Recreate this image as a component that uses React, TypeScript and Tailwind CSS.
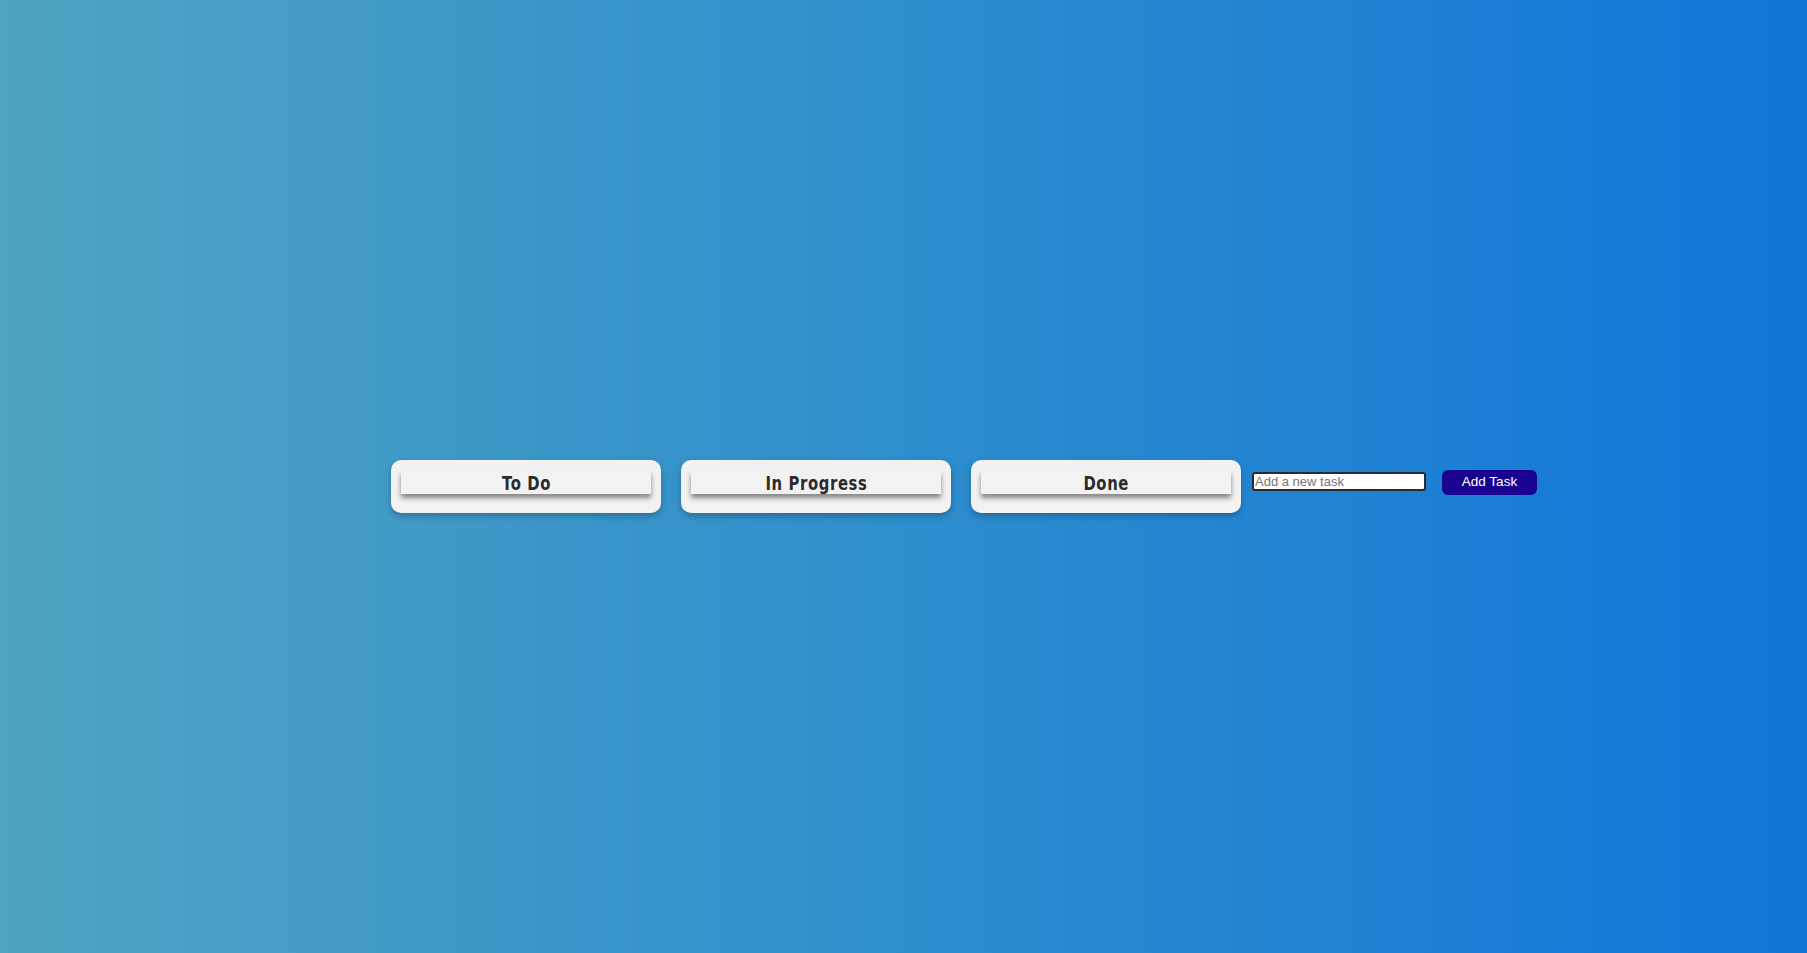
import React from "react";

function Column({ title }: { title: string }) {
  return (
    <div className="w-[270px] h-[53px] rounded-[10px] bg-[#f2f2f2] px-[10px] pt-[10px] shadow-[0_3px_6px_rgba(0,0,0,0.25)]">
      <div className="h-[24px] bg-[#f2f2f2] shadow-[0_4px_5px_rgba(0,0,0,0.45)] flex items-center justify-center pt-[3px]">
        <span className="inline-block scale-x-[0.78] text-[19px] font-bold text-[#2b2b2b] tracking-[0.8px] leading-none font-['DejaVu_Sans',sans-serif]">
          {title}
        </span>
      </div>
    </div>
  );
}

export default function App() {
  return (
    <div className="w-full min-h-screen h-[953px] bg-[linear-gradient(to_right,#4ea5c2,#0f76d8)] flex items-center justify-center pl-[121px] pt-[20px]">
      <div className="flex items-start">
        <Column title="To Do" />
        <div className="w-[20px]" />
        <Column title="In Progress" />
        <div className="w-[20px]" />
        <Column title="Done" />
        <input
          placeholder="Add a new task"
          className="ml-[11px] mt-[12px] w-[174px] h-[19px] bg-white border-2 border-[#2a2a2a] rounded-[3px] px-[1px] text-[13px] text-black placeholder:text-[#757575] font-['Liberation_Sans',Arial,sans-serif] outline-none"
        />
        <button className="ml-[16px] mt-[10px] w-[95px] h-[25px] rounded-[6px] bg-[#1b0391] text-white text-[13.5px] font-['Liberation_Sans',Arial,sans-serif]">
          Add Task
        </button>
      </div>
    </div>
  );
}
